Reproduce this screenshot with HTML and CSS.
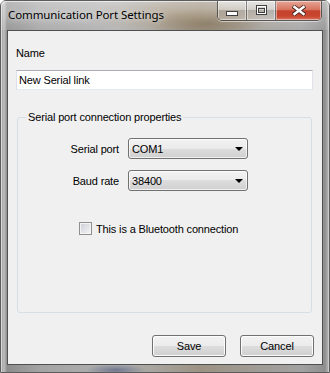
FILE: index.html
```html
<!DOCTYPE html>
<html lang="en">
<head>
  <meta charset="UTF-8" />
  <title>Communication Port Settings</title>
  <link rel="stylesheet" href="styles.css">
</head>
<body>
  <div class="window">
    <div class="titlebar">
      <span class="title">Communication Port Settings</span>
      <div class="caption">
        <div class="cap cap-min">
          <svg width="13" height="6" viewBox="0 0 13 6"><rect x="0.5" y="0.5" width="11" height="4" fill="#fff" stroke="#404040"/></svg>
        </div>
        <div class="cap cap-max">
          <svg width="11" height="10" viewBox="0 0 11 10"><rect x="0.5" y="0.5" width="10" height="9" fill="none" stroke="#404040"/><rect x="1.5" y="1.5" width="8" height="7" fill="none" stroke="#fff"/><rect x="2.5" y="3.5" width="6" height="4" fill="none" stroke="#404040"/></svg>
        </div>
        <div class="cap cap-close">
          <svg width="14" height="11" viewBox="0 0 14 11"><path d="M1 1 L13 10 M13 1 L1 10" stroke="#4a2a24" stroke-width="4.2"/><path d="M1.5 1.3 L12.5 9.7 M12.5 1.3 L1.5 9.7" stroke="#fff" stroke-width="2.4"/></svg>
        </div>
      </div>
    </div>

    <div class="client">
      <div class="name-label">Name</div>
      <input class="textbox" type="text" value="New Serial link">

      <fieldset class="group">
        <legend>Serial port connection properties</legend>
        <div class="fields">
          <span class="field-label">Serial port</span>
          <div class="combo"><span>COM1</span><i class="arrow"></i></div>
          <span class="field-label">Baud rate</span>
          <div class="combo"><span>38400</span><i class="arrow"></i></div>
        </div>
        <label class="check"><span class="check-box"></span>This is a Bluetooth connection</label>
      </fieldset>

      <div class="actions">
        <button class="btn">Save</button>
        <button class="btn">Cancel</button>
      </div>
    </div>
  </div>
</body>
</html>
```

FILE: styles.css
```css
body {
  margin: 0;
  width: 330px;
  height: 373px;
  overflow: hidden;
  background: #ffffff;
  font-family: "Liberation Sans", Arial, sans-serif;
  font-size: 11px;
  letter-spacing: -0.15px;
  color: #000;
}
.window {
  width: 330px;
  height: 373px;
  box-sizing: border-box;
  display: flex;
  flex-direction: column;
  border: 1px solid #5c5c5c;
  border-radius: 6px 6px 0 0;
  background:
    radial-gradient(ellipse 60px 14px at 205px 22px, rgba(100, 80, 50, 0.6), rgba(100, 80, 50, 0) 100%),
    radial-gradient(ellipse 100px 18px at 180px 14px, rgba(150, 125, 85, 0.55), rgba(150, 125, 85, 0) 100%),
    radial-gradient(ellipse 30px 6px at 115px 369px, rgba(70, 80, 120, 0.6), rgba(70, 80, 120, 0) 100%),
    linear-gradient(to right, #9a9a9a 0px, #bdbdbd 3px, #8d8d8d 6px, #a4a4a4 40px, #b0b0b0 120px, #9c9284 200px, #a2a2a2 300px, #8f8f8f 324px, #b0b0b0 327px, #8a8a8a 330px);
  box-shadow: inset 1px 1px 0 rgba(255, 255, 255, 0.6), inset -1px 0 0 rgba(255, 255, 255, 0.4);
}
.titlebar {
  height: 29px;
  display: flex;
  align-items: flex-start;
  background: linear-gradient(to bottom, rgba(255, 255, 255, 0.4), rgba(255, 255, 255, 0.1));
}
.title {
  font-family: "Noto Sans", "Open Sans", sans-serif;
  font-size: 11.5px;
  letter-spacing: -0.1px;
  line-height: 16px;
  padding: 6px 0 0 7px;
  color: #000;
  text-shadow: 0 0 6px rgba(255, 255, 255, 0.9);
}
.caption {
  margin-left: auto;
  margin-right: 7px;
  display: flex;
  height: 19px;
  border: 1px solid rgba(40, 40, 40, 0.65);
  border-top: none;
  border-radius: 0 0 5px 5px;
  overflow: hidden;
  box-shadow: 0 1px 0 rgba(255, 255, 255, 0.5);
}
.cap {
  display: flex;
  align-items: center;
  justify-content: center;
  box-shadow: inset 0 0 0 1px rgba(255, 255, 255, 0.45);
}
.cap-min, .cap-max {
  width: 28px;
  border-right: 1px solid rgba(40, 40, 40, 0.5);
  background: linear-gradient(to bottom, rgba(255, 255, 255, 0.55), rgba(255, 255, 255, 0.3) 50%, rgba(0, 0, 0, 0.05) 50%, rgba(255, 255, 255, 0.25));
}
.cap-min svg { margin-top: 6px; }
.cap-max svg { margin-top: -2px; }
.cap-close {
  width: 45px;
  background: linear-gradient(to bottom, #e6a797 0%, #d7745f 45%, #c5432c 52%, #c8462f 80%, #d8745c 100%);
}
.cap-close svg { margin-top: -1px; }

.client {
  flex: 1;
  margin: 0 6px 7px 6px;
  border: 1px solid #505050;
  background: #f0f0f0;
  display: flex;
  flex-direction: column;
  padding: 16px 8px 7px 8px;
}
.name-label {
  line-height: 13px;
}
.textbox {
  margin: 10px 1px 0 0;
  height: 20px;
  box-sizing: border-box;
  border: 1px solid;
  border-color: #abadb3 #e2e3ea #e3e9ef #dbdfe6;
  padding: 0 2px;
  font-family: inherit;
  font-size: 11px;
  letter-spacing: -0.15px;
  color: #000;
  background: #fff;
  outline: none;
}
.group {
  margin: 21px 2px 0 1px;
  padding: 0;
  border: 1px solid #d5dfe5;
  border-radius: 3px;
  height: 202px;
  box-sizing: border-box;
}
.group legend {
  margin-left: 8px;
  padding: 0 2px 0 2px;
  line-height: 13px;
}
.fields {
  display: grid;
  grid-template-columns: 101px 120px;
  column-gap: 9px;
  row-gap: 11px;
  align-items: center;
  margin-top: 14px;
}
.field-label {
  text-align: right;
}
.combo {
  height: 21px;
  box-sizing: border-box;
  border: 1px solid #707070;
  border-radius: 3px;
  background: linear-gradient(to bottom, #f2f2f2 0%, #ebebeb 50%, #dddddd 50%, #cfcfcf 100%);
  box-shadow: inset 0 0 0 1px rgba(255, 255, 255, 0.7);
  display: flex;
  align-items: center;
  padding: 0 4px 0 3px;
}
.combo span {
  flex: 1;
}
.arrow {
  width: 0;
  height: 0;
  border-left: 4px solid transparent;
  border-right: 4px solid transparent;
  border-top: 4px solid #000;
  margin-top: 1px;
}
.check {
  display: flex;
  align-items: center;
  gap: 4px;
  margin: 31px 0 0 61px;
}
.check-box {
  width: 13px;
  height: 13px;
  box-sizing: border-box;
  border: 1px solid #8e8f8f;
  background: linear-gradient(135deg, #cbcfd5, #f6f6f6);
  box-shadow: inset 0 0 0 1px #f4f4f4;
}
.actions {
  margin-top: auto;
  display: flex;
  justify-content: flex-end;
  gap: 14px;
}
.btn {
  width: 74px;
  height: 22px;
  border: 1px solid #707070;
  border-radius: 3px;
  background: linear-gradient(to bottom, #f2f2f2 0%, #ebebeb 50%, #dddddd 50%, #cfcfcf 100%);
  box-shadow: inset 0 0 0 1px #fcfcfc;
  font-family: inherit;
  font-size: 11px;
  letter-spacing: -0.15px;
  color: #000;
  padding: 0;
}
```
